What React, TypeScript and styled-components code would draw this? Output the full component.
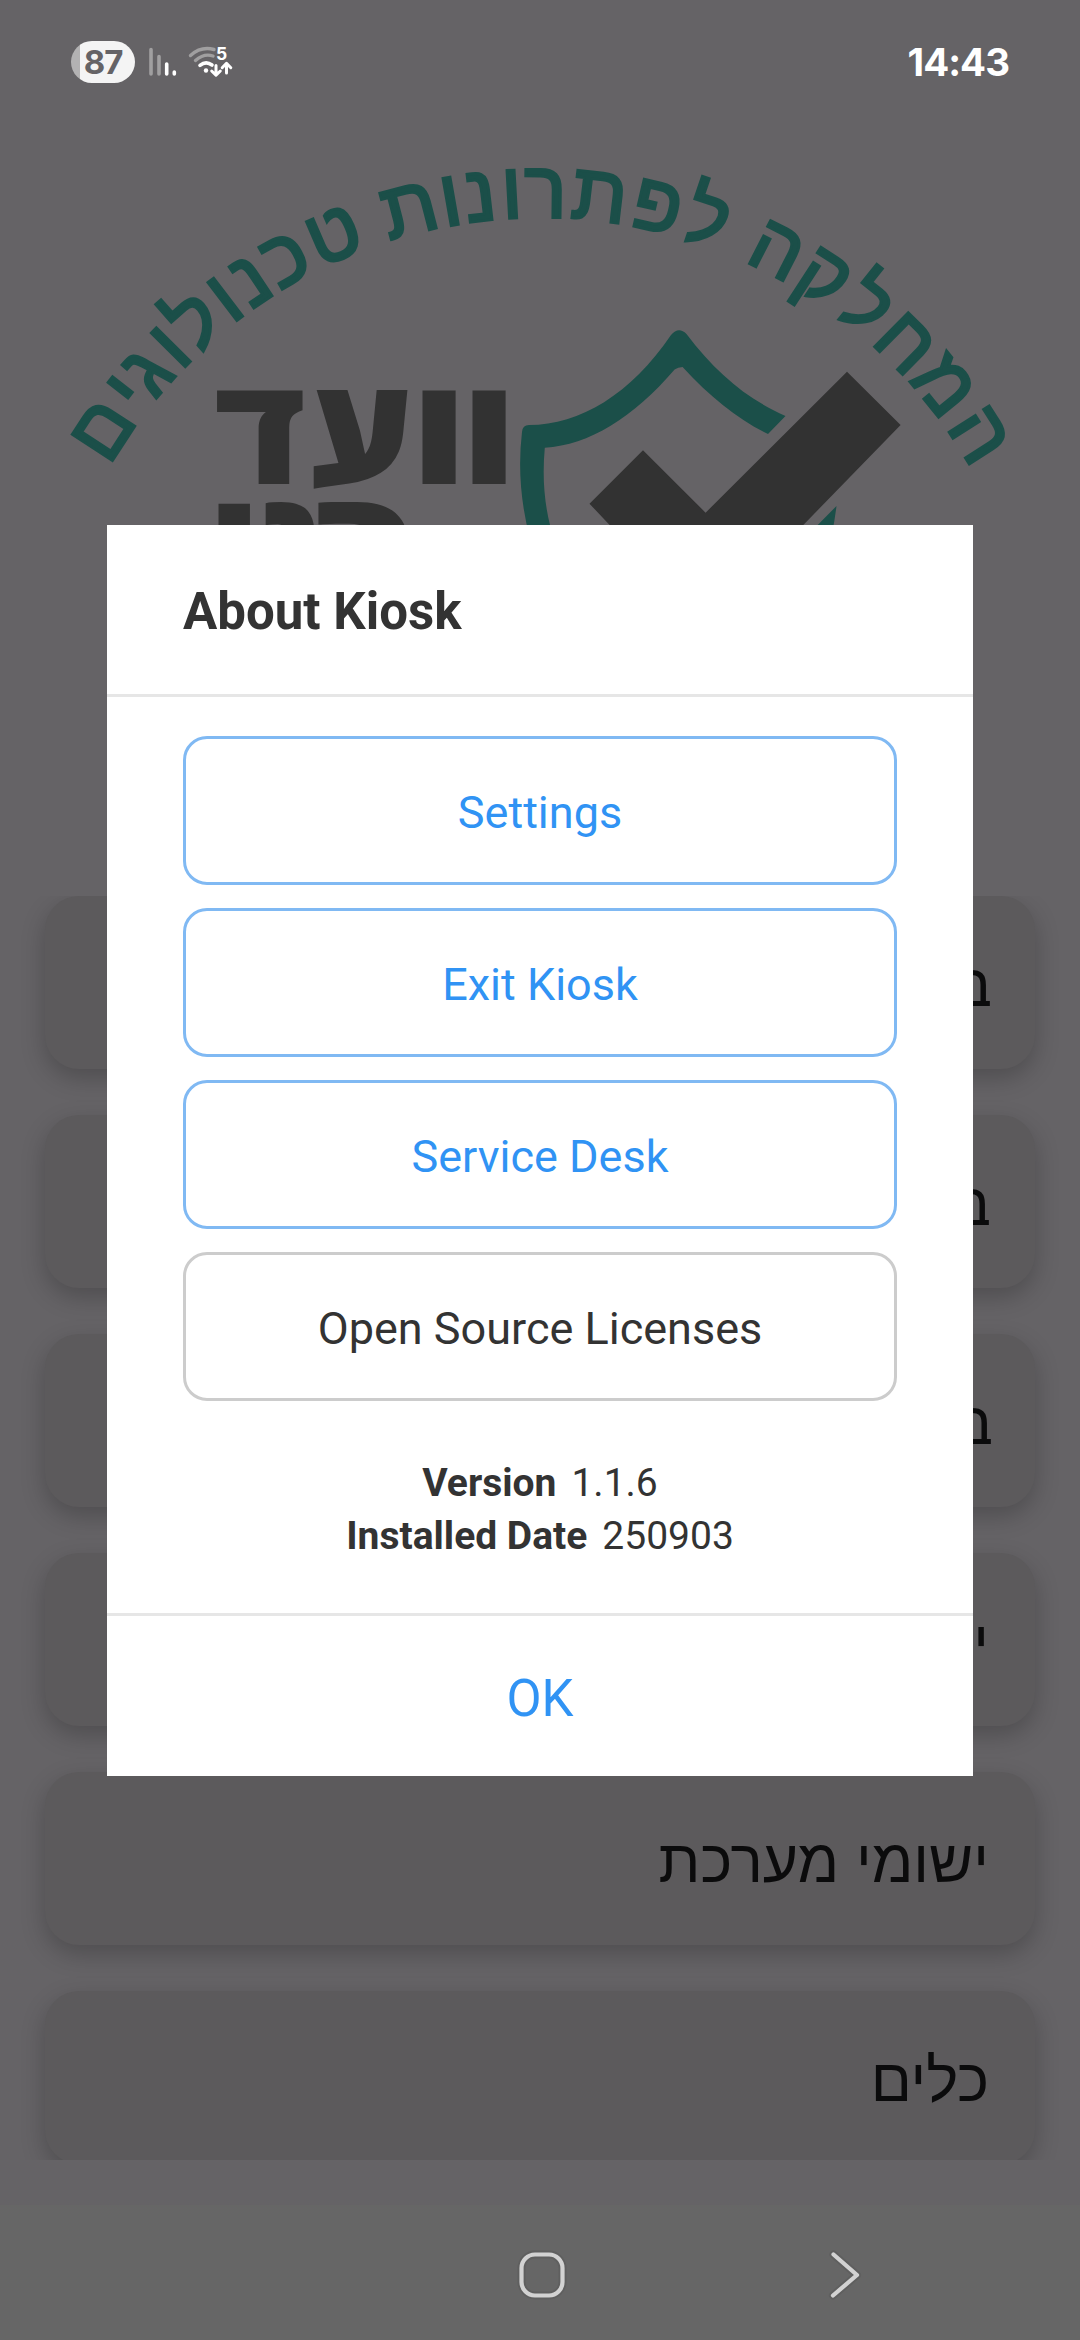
import React from "react";
import styled, { createGlobalStyle } from "styled-components";

const GlobalStyle = createGlobalStyle`
  body { margin: 0; background: #656366; }
  * { box-sizing: border-box; }
`;

const Screen = styled.div`
  position: relative;
  width: 1080px;
  height: 2340px;
  display: flex;
  flex-direction: column;
  overflow: hidden;
  background: #656366;
  font-family: Roboto, "Liberation Sans", sans-serif;
`;

const StatusBar = styled.header`
  height: 125px;
  flex: none;
  display: flex;
  align-items: center;
  justify-content: space-between;
  padding: 0 71px 1px;
`;

const StatusIcons = styled.div`
  display: flex;
  align-items: center;
`;

const Battery = styled.div`
  width: 64px;
  height: 42px;
  border-radius: 21px;
  background: linear-gradient(to right, #b3b2b3 9px, #f4f4f4 9px);
  color: #656366;
  font: 700 33px/42px Inter, sans-serif;
  letter-spacing: -1px;
  text-align: center;
`;

const Clock = styled.div`
  color: #fff;
  font: 700 38.5px/48px Inter, sans-serif;
  letter-spacing: -1px;
`;

const SignalSvg = styled.svg`
  margin-left: 14px;
`;

const WifiSvg = styled.svg`
  margin-left: 11px;
`;

const Logo = styled.svg`
  display: block;
  flex: none;
  width: 1080px;
  height: 771px;
`;

const ListViewport = styled.main`
  height: 1264px;
  flex: none;
  overflow: hidden;
`;

const List = styled.div`
  display: flex;
  flex-direction: column;
  gap: 46px;
  padding: 0 45px;
`;

const ListCard = styled.div<{ $inset: number }>`
  height: 173px;
  flex: none;
  display: flex;
  align-items: center;
  padding: 5px ${(p) => p.$inset}px 0;
  direction: rtl;
  border-radius: 34px;
  background: #5c5a5c;
  box-shadow: 0 9px 24px rgba(0, 0, 0, 0.22);
  color: #0b0b0c;
  font: 400 60.6px/90px "Liberation Sans", sans-serif;
`;

const ListLabel = styled.span`
  display: block;
`;

const NavBar = styled.nav`
  margin-top: auto;
  height: 135px;
  flex: none;
  background: #666;
`;

const Dialog = styled.section`
  position: absolute;
  left: 107px;
  top: 525px;
  width: 866px;
  height: 1251px;
  display: flex;
  flex-direction: column;
  background: #fff;
  color: #333;
`;

const DialogTitle = styled.h1`
  margin: 0;
  height: 172px;
  flex: none;
  padding: 0 76px;
  border-bottom: 3px solid #e6e6e6;
  font-size: 51px;
  line-height: 173px;
  font-weight: 700;
`;

const DialogBody = styled.div`
  flex: 1;
  display: flex;
  flex-direction: column;
  gap: 23px;
  padding: 39px 76px 0;
`;

const ActionButton = styled.button<{ $neutral?: boolean }>`
  height: 149px;
  flex: none;
  padding: 5px 0 0;
  border: 3px solid ${(p) => (p.$neutral ? "#cccccc" : "#80b9f3")};
  border-radius: 24px;
  background: #fff;
  color: ${(p) => (p.$neutral ? "#333" : "#3093f4")};
  font: 400 45px/60px Roboto, sans-serif;
`;

const Details = styled.dl`
  margin: 33px 0 0;
  display: flex;
  flex-direction: column;
  align-items: center;
`;

const DetailRow = styled.div`
  display: flex;
  gap: 15px;
  height: 53px;
  font-size: 39px;
  line-height: 53px;
`;

const DetailName = styled.dt`
  font-weight: 700;
`;

const DetailValue = styled.dd`
  margin: 0;
`;

const ConfirmButton = styled.button`
  height: 163px;
  flex: none;
  border: 0;
  border-top: 3px solid #e6e6e6;
  padding: 5px 0 0;
  background: #fff;
  color: #3093f4;
  font: 400 51px/60px Roboto, sans-serif;
`;

/* letter and its angle on the circle, in degrees from the top */
const ARC: [string, number][] = [
  ["ה", 57.6], ["מ", 50.9], ["ח", 44.6], ["ל", 38.7], ["ק", 33], ["ה", 27.1],
  ["ל", 18.7], ["פ", 13], ["ת", 6.6], ["ר", 0.6], ["ו", -3.1], ["נ", -6.6],
  ["ו", -9.9], ["ת", -14.5], ["ט", -23.3], ["כ", -29.2], ["נ", -33.7],
  ["ו", -37.2], ["ל", -41.3], ["ו", -45.2], ["ג", -48.9], ["י", -52.1], ["ם", -57],
];

/* letter, centre x, baseline y, horizontal stretch */
const CREST: [string, number, number, number][] = [
  ["ו", 489, 484, 1.18], ["ו", 439, 484, 1.18], ["ע", 362, 484, 1.1], ["ד", 260, 484, 1.09],
  ["כ", 364, 597, 1.3], ["נ", 290, 597, 1.04], ["י", 234, 597, 1.12],
];

const CARDS: [string, number][] = [
  ["ב", 43], ["ב", 44], ["ב", 42], ["י", 46], ["ישומי מערכת", 46], ["כלים", 46],
];

const SignalIcon = () => (
  <SignalSvg width="28" height="30" viewBox="0 0 28 30" fill="none" strokeWidth="3.6" strokeLinecap="round">
    <path d="M2 2.5V27M10 9.5V27" stroke="#a09fa0" />
    <path d="M17.7 17V27M25.3 25V27" stroke="#fff" />
  </SignalSvg>
);

const WifiIcon = () => (
  <WifiSvg width="46" height="36" viewBox="0 0 46 36" fill="none" strokeLinecap="round">
    <path d="M2.500 11.500Q13 2 26 5.500M7.500 16.500Q16 9 25 12" stroke="#a09fa0" strokeWidth="3.4" />
    <path d="M12 21.300Q18 16.600 24 21" stroke="#fff" strokeWidth="3.6" />
    <circle cx="18" cy="26.500" r="2.2" fill="#fff" />
    <path d="M28 21.500V31M23.700 27L28 31.300L32.300 27M38.500 29V20M34.200 23.700L38.500 19.300L42.800 23.700" stroke="#fff" strokeWidth="3" strokeLinejoin="round" />
    <text x="28" y="16" fill="#fff" fontFamily="Inter, sans-serif" fontWeight="700" fontSize="17.5">5</text>
  </WifiSvg>
);

const LogoArt = () => (
  <Logo viewBox="0 125 1080 771">
    <g
      fill="#1b4f49"
      stroke="#1b4f49"
      strokeWidth="2.8"
      fontFamily="'Liberation Sans', sans-serif"
      fontWeight="400"
      fontSize="80"
      textAnchor="middle"
    >
      {ARC.map(([ch, angle], i) => (
        <text key={i} x="540" y="217.500" transform={`rotate(${angle} 540 714)`}>{ch}</text>
      ))}
    </g>
    <g fill="#323232" fontFamily="'Open Sans', sans-serif" fontWeight="800" fontSize="148" textAnchor="middle">
      {CREST.map(([ch, x, y, stretch], i) => (
        <text key={i} transform={`translate(${x} ${y}) scale(${stretch} 1)`}>{ch}</text>
      ))}
    </g>
    <path
      fill="#1b4f49"
      d="M522 432Q522.500 425 529 425C580 425 631 394 671 335Q678.500 326 686.500 334C716 373 747 399 785.500 416L768 434C739 420 711 398 682.600 367Q678 367 674.600 369.500C633 418 589 445 544.800 447.700Q541 489 550 525L560 570H540Q514 500 522 432ZM836.500 506L790 553L825 560Q833 535 836.500 506Z"
    />
    <path fill="#323232" d="M847 371.700L900.600 425L705 626L589.500 503.700L643 450.300L705.600 512.700Z" />
  </Logo>
);

const NavIcons = () => (
  <svg width="1080" height="135" viewBox="0 2205 1080 135" fill="none" strokeLinecap="round" strokeLinejoin="round">
    <g stroke="#5f5f5f" strokeWidth="8">
      <rect x="521.500" y="2254.500" width="41" height="41" rx="13.500" />
      <path d="M833.500 2254.500L857 2275L833 2295.500" />
    </g>
    <g stroke="#d2d2d2" strokeWidth="4.200">
      <rect x="521.500" y="2254.500" width="41" height="41" rx="13.500" />
      <path d="M833.500 2254.500L857 2275L833 2295.500" />
    </g>
  </svg>
);

export default function App() {
  return (
    <Screen>
      <GlobalStyle />
      <StatusBar>
        <StatusIcons>
          <Battery>87</Battery>
          <SignalIcon />
          <WifiIcon />
        </StatusIcons>
        <Clock>14:43</Clock>
      </StatusBar>
      <LogoArt />
      <ListViewport>
        <List>
          {CARDS.map(([label, inset], i) => (
            <ListCard key={i} $inset={inset}><ListLabel>{label}</ListLabel></ListCard>
          ))}
        </List>
      </ListViewport>
      <NavBar><NavIcons /></NavBar>
      <Dialog>
        <DialogTitle>About Kiosk</DialogTitle>
        <DialogBody>
          <ActionButton>Settings</ActionButton>
          <ActionButton>Exit Kiosk</ActionButton>
          <ActionButton>Service Desk</ActionButton>
          <ActionButton $neutral>Open Source Licenses</ActionButton>
          <Details>
            <DetailRow><DetailName>Version</DetailName><DetailValue>1.1.6</DetailValue></DetailRow>
            <DetailRow><DetailName>Installed Date</DetailName><DetailValue>250903</DetailValue></DetailRow>
          </Details>
        </DialogBody>
        <ConfirmButton>OK</ConfirmButton>
      </Dialog>
    </Screen>
  );
}
